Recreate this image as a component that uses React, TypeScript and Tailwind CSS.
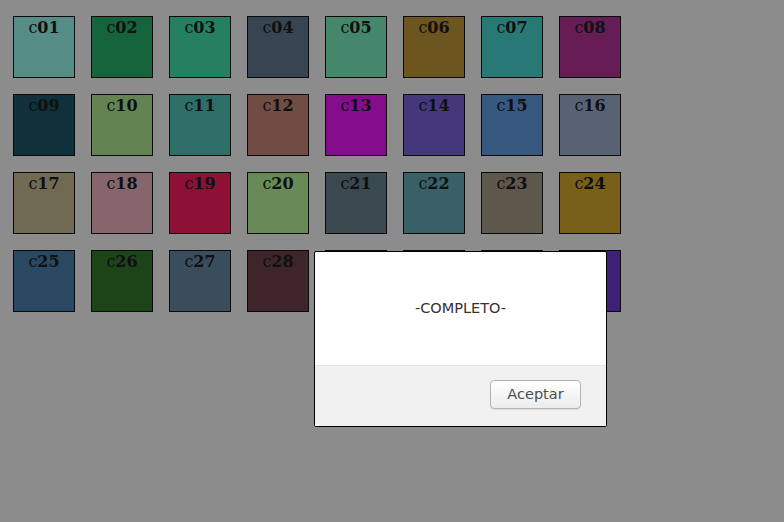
import React from 'react';

const swatches: { label: string; color: string }[] = [
    { label: '01', color: '#568d86' },
    { label: '02', color: '#15643b' },
    { label: '03', color: '#258061' },
    { label: '04', color: '#374553' },
    { label: '05', color: '#45876a' },
    { label: '06', color: '#6c551e' },
    { label: '07', color: '#287876' },
    { label: '08', color: '#661d56' },
    { label: '09', color: '#10303b' },
    { label: '10', color: '#638452' },
    { label: '11', color: '#2d6e66' },
    { label: '12', color: '#704c44' },
    { label: '13', color: '#830d8a' },
    { label: '14', color: '#44387a' },
    { label: '15', color: '#37587f' },
    { label: '16', color: '#586273' },
    { label: '17', color: '#706a52' },
    { label: '18', color: '#87666b' },
    { label: '19', color: '#8c1135' },
    { label: '20', color: '#688a57' },
    { label: '21', color: '#3a4850' },
    { label: '22', color: '#395f67' },
    { label: '23', color: '#5e574c' },
    { label: '24', color: '#785f1a' },
    { label: '25', color: '#2a4862' },
    { label: '26', color: '#1d4419' },
    { label: '27', color: '#3a4d5c' },
    { label: '28', color: '#3e2529' },
    { label: '29', color: '#1a1a1a' },
    { label: '30', color: '#1a1a1a' },
    { label: '31', color: '#1a1a1a' },
    { label: '32', color: '#3f1f78' },
];

const App: React.FC = () => {
    return (
        <div className="relative w-[784px] h-[522px] bg-[#8c8c8c] overflow-hidden">
            <div className="grid grid-cols-[repeat(8,62px)] gap-4 pl-[13px] pt-4">
                {swatches.map(s => (
                    <div
                        key={s.label}
                        className="w-[62px] h-[62px] border border-[#0a0a0a] text-center text-[16px] leading-[20px] pt-[1px] text-[#101010] font-['DejaVu_Serif',serif]"
                        style={{ backgroundColor: s.color }}
                    >
                        <span>c</span><b>{s.label}</b>
                    </div>
                ))}
            </div>

            {/* modal */}
            <div className="absolute left-[314px] top-[251px] w-[293px] h-[176px] border border-black rounded-[2px] bg-white flex flex-col font-['DejaVu_Sans',sans-serif]">
                <div className="h-[113px] flex items-center justify-center text-[14.5px] text-[#333] pt-[1px]">
                    -COMPLETO-
                </div>
                <div className="flex-1 bg-[#f1f1f1] border-t border-[#e3e3e3] flex justify-end items-start pt-[14px] pr-[25px]">
                    <button className="w-[91px] h-[29px] rounded-[4px] border border-[#b4b4b4] bg-gradient-to-b from-white to-[#ececec] text-[14.5px] text-[#4d4d4d] shadow-[0_1px_1px_rgba(0,0,0,0.08)]">
                        Aceptar
                    </button>
                </div>
            </div>
        </div>
    );
};

export default App;
